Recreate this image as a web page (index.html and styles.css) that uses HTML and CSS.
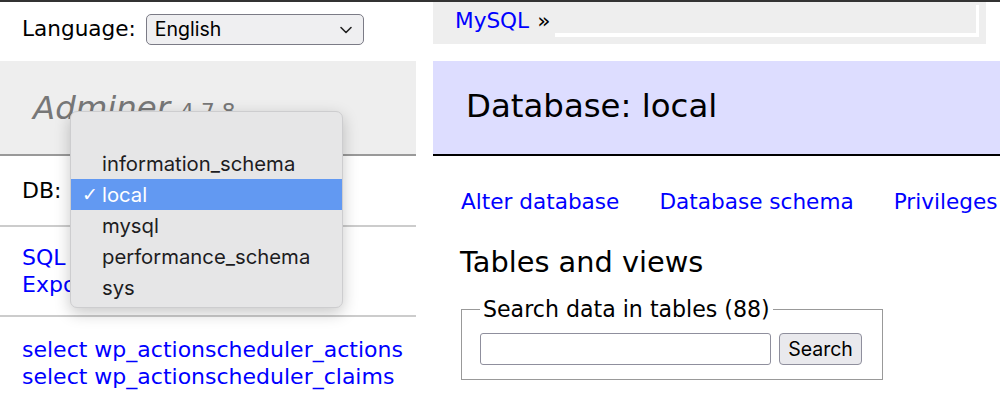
FILE: index.html
```html
<!DOCTYPE html>
<html>
<head>
	<meta charset="utf-8">
	<title>Database: local - Adminer</title>
	<link rel="stylesheet" href="styles.css">
</head>
<body>
<div class="page">
	<div class="menu">
		<form class="lang">
			<label>Language:</label>
			<div class="select lang-select">
				<span>English</span>
				<svg width="14" height="8" viewBox="0 0 14 8"><path d="M2 1.5 L7 6.5 L12 1.5" fill="none" stroke="#222" stroke-width="1.6" stroke-linecap="round" stroke-linejoin="round"/></svg>
			</div>
		</form>
		<h1><a class="logo" href="#">Adminer</a> <span class="version">4.7.8</span></h1>
		<p class="dbs">DB: <span class="select db-select"></span></p>
		<p class="links">
			<a href="#">SQL command</a><br>
			<a href="#">Export</a>
		</p>
		<ul class="tables">
			<li><a href="#">select wp_actionscheduler_actions</a></li>
			<li><a href="#">select wp_actionscheduler_claims</a></li>
		</ul>
		<!-- open DB dropdown -->
		<div class="popup">
			<div class="opt">&nbsp;</div>
			<div class="opt">information_schema</div>
			<div class="opt active"><span class="check">&#10003;</span>local</div>
			<div class="opt">mysql</div>
			<div class="opt">performance_schema</div>
			<div class="opt">sys</div>
		</div>
	</div>
	<div class="content">
		<div class="breadcrumb"><a href="#">MySQL</a> &raquo; <span class="crumb-box"></span></div>
		<h2>Database: local</h2>
		<p class="db-links">
			<a href="#">Alter database</a>
			<a href="#">Database schema</a>
			<a href="#">Privileges</a>
		</p>
		<h3>Tables and views</h3>
		<fieldset class="search">
			<legend>Search data in tables (88)</legend>
			<input type="search" class="query">
			<button class="btn">Search</button>
		</fieldset>
	</div>
</div>
</body>
</html>
```

FILE: styles.css
```css
body { margin: 0; background: #fff; color: #000; font: 22px/1.25 "DejaVu Sans", Verdana, sans-serif; overflow: hidden; }
a { color: #00f; text-decoration: none; }
.page { display: flex; border-top: 2px solid #333; }

/* left menu */
.menu { position: relative; width: 416px; flex: none; }
.lang { display: flex; align-items: center; gap: 10px; height: 59px; padding: 0 22px 4px; box-sizing: border-box; margin: 0; font-size: 21.6px; }
.select { display: flex; align-items: center; justify-content: space-between; box-sizing: border-box; height: 31px; border: 1px solid #7b7b86; border-radius: 5px; background: #efeff1; font-family: Inter, "Liberation Sans", sans-serif; font-size: 19.5px; }
.lang-select { width: 218px; padding: 0 10px 0 8px; }
h1 { margin: 0; height: 95px; box-sizing: border-box; padding: 27px 33px; font-size: 32.4px; line-height: 40px; font-weight: normal; font-style: italic; color: #777; background: #eee; border-bottom: 2px solid #999; }
h1 .logo { color: #777; }
h1 .version { font-size: 21.7px; font-style: normal; }
.dbs { display: flex; align-items: center; gap: 10px; margin: 0; height: 71px; padding: 0 22px; box-sizing: border-box; border-bottom: 2px solid #ccc; }
.db-select { width: 250px; }
.links { margin: 0; padding: 17px 22px; border-bottom: 2px solid #ccc; line-height: 27px; }
.tables { list-style: none; margin: 0; padding: 19px 22px; line-height: 27px; white-space: nowrap; }

.popup { position: absolute; left: 70px; top: 109px; width: 273px; box-sizing: border-box; padding: 5px 0 4px; background: #e6e6e7; border: 1px solid #cdcdcf; border-radius: 7px; box-shadow: 0 5px 16px rgba(0,0,0,0.22); font-family: Inter, "Liberation Sans", sans-serif; font-size: 20.3px; }
.opt { position: relative; height: 31px; line-height: 31px; padding-left: 31px; color: #1d1d1f; }
.opt.active { background: #6299f2; color: #fff; }
.check { position: absolute; left: 11px; top: 0; font-family: "DejaVu Sans", sans-serif; font-size: 19px; }

/* right content */
.content { flex: 1; margin-left: 17px; min-width: 0; }
.breadcrumb { display: flex; height: 42px; margin-right: 14px; padding: 0 0 0 22px; background: #eee; line-height: 38px; white-space: nowrap; font-size: 21.6px; }
.breadcrumb a { margin-right: 8px; }
.crumb-box { flex: 1; height: 32px; margin: 3px 7px 0 5px; box-sizing: border-box; border-right: 3px solid #fff; border-bottom: 4px solid #fff; }
h2 { margin: 17px 0 0; height: 95px; box-sizing: border-box; padding: 25px 33px; font-size: 32.4px; line-height: 40px; font-weight: normal; background: #ddf; border-bottom: 2px solid #000; white-space: nowrap; }
.db-links { display: flex; gap: 40px; margin: 32px 0 0 28px; font-size: 21.6px; line-height: 27px; white-space: nowrap; }
h3 { margin: 29px 0 0 27px; font-size: 28.8px; line-height: 36px; font-weight: normal; }
.search { display: inline-flex; gap: 8px; margin: 16px 0 0 28px; padding: 10px 20px 14px 18px; border: 1.5px solid #999; }
.search legend { padding: 0 3px; line-height: 27px; font-size: 22.1px; }
.query { width: 291px; height: 32px; box-sizing: border-box; border: 1px solid #8f8f9d; border-radius: 3px; background: #fff; padding: 0; }
.btn { height: 32px; width: 83px; box-sizing: border-box; border: 1px solid #8f8f9d; border-radius: 4px; background: #e9e9ed; color: #000; font-family: Inter, "Liberation Sans", sans-serif; font-size: 19.5px; padding: 0; }
```
